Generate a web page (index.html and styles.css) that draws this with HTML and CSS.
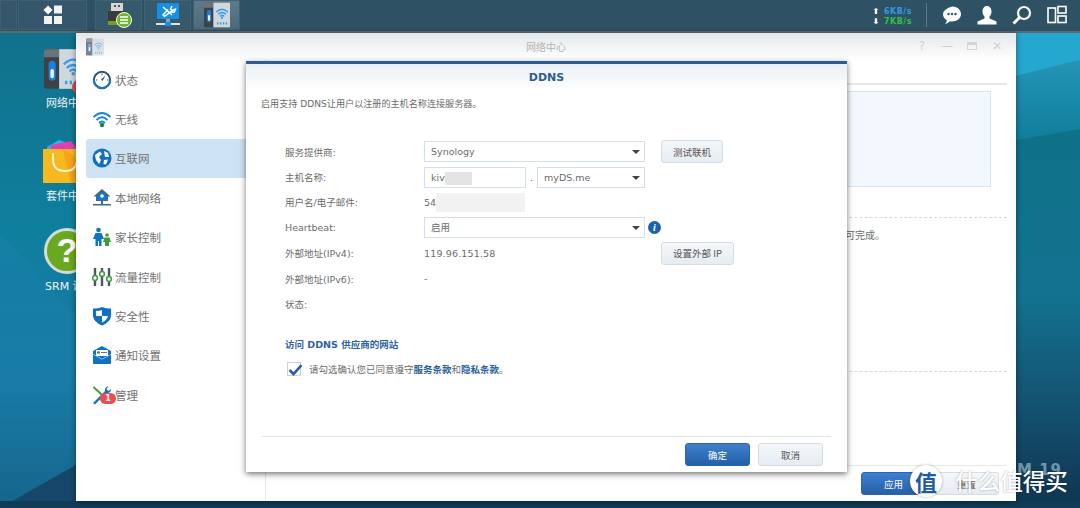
FILE: index.html
```html
<!DOCTYPE html>
<html lang="zh-CN">
<head>
  <meta charset="UTF-8">
  <link rel="stylesheet" href="styles.css">
  <title>DDNS</title>
</head>
<body>
  <svg class="defs" width="0" height="0">
    <symbol id="netIcon" viewBox="0 0 36 36">
      <path d="M0 3Q0 1 2 1H13V35H2Q0 35 0 33Z" fill="#3c4248"/>
      <path d="M0 3Q0 1 2 1H13V8H0Z" fill="#6d7378"/>
      <rect x="4" y="11" width="6" height="17" rx="3" fill="#1b7fe0"/>
      <rect x="5.5" y="18" width="3" height="8" rx="1.5" fill="#e8f3fb"/>
      <rect x="13" y="1" width="23" height="34" fill="#cfd8dc"/>
      <path d="M17 14Q25 6 33 14M19.500 17Q25 12 30.500 17M22 20Q25 17 28 20" fill="none" stroke="#3b9be8" stroke-width="2"/>
      <circle cx="25" cy="22" r="1.500" fill="#3b9be8"/>
      <path d="M19 28v3M23 28v3M27 28v3M31 28v3" stroke="#3b9be8" stroke-width="2"/>
    </symbol>
  </svg>

  <div class="desktop">
    <!-- Wallpaper -->
    <svg class="wallpaper" width="1080" height="508" viewBox="0 0 1080 508">
      <defs>
        <linearGradient id="wallBase" x1="0" y1="0" x2="0" y2="1">
          <stop offset="0" stop-color="#116f89"/>
          <stop offset="0.45" stop-color="#0f7f9e"/>
          <stop offset="0.75" stop-color="#1878a4"/>
          <stop offset="1" stop-color="#124a6b"/>
        </linearGradient>
        <linearGradient id="wallRight" x1="0" y1="0" x2="0" y2="1">
          <stop offset="0" stop-color="#0f7188"/>
          <stop offset="0.45" stop-color="#137290"/>
          <stop offset="0.75" stop-color="#14506f"/>
          <stop offset="1" stop-color="#0e3550"/>
        </linearGradient>
        <linearGradient id="wallBand" x1="0" y1="0" x2="0" y2="1">
          <stop offset="0" stop-color="#2594b6"/>
          <stop offset="1" stop-color="#0f7f9c"/>
        </linearGradient>
      </defs>
      <rect width="1080" height="508" fill="url(#wallBase)"/>
      <path d="M0 233L76 317V508H0Z" fill="#1a80ab" opacity="0.5"/>
      <path d="M0 508L120 440V508Z" fill="#14476a"/>
      <rect x="1016" y="120" width="64" height="388" fill="url(#wallRight)"/>
      <path d="M1016 76L1080 60V129L1016 140Z" fill="url(#wallBand)"/>
      <path d="M1016 33H1080V60L1016 76Z" fill="#25a8d0"/>
      <rect y="501" width="1080" height="7" fill="#103c58"/>
    </svg>
    <span class="wall-mark">M 19</span>

    <!-- Taskbar -->
    <div class="taskbar">
      <div class="task-stub"></div>
      <div class="task-main">
        <svg width="20" height="20" viewBox="0 0 20 20">
          <path d="M5 0.500L9.500 5 5 9.500 0.500 5Z" fill="#fff"/>
          <rect x="11" y="0.500" width="8" height="8" fill="#f2f2f2"/>
          <rect x="1" y="11" width="8" height="8" fill="#f2f2f2"/>
          <rect x="11" y="11" width="8" height="8" fill="#f2f2f2"/>
        </svg>
      </div>
      <div class="task-btn">
        <svg width="26" height="26" viewBox="0 0 26 26">
          <rect x="5" y="1" width="12" height="9" fill="#d7d7d7"/>
          <rect x="8" y="3" width="2" height="2" fill="#555"/>
          <rect x="12" y="3" width="2" height="2" fill="#555"/>
          <rect x="2" y="9" width="18" height="14" rx="1" fill="#3a3d35"/>
          <rect x="2" y="19" width="12" height="4" fill="#7c9a2c"/>
          <circle cx="18" cy="18" r="7.500" fill="#6eb52c" stroke="#fff"/>
          <path d="M14 15h8M14 18h8M14 21h8" stroke="#fff" stroke-width="1.500"/>
        </svg>
      </div>
      <div class="task-btn">
        <svg width="24" height="26" viewBox="0 0 24 26">
          <rect x="1" y="1" width="22" height="16" rx="1" fill="#1690e4"/>
          <path d="M7 5l9 8M16 4l-1.500 3 2 1.500 3-1.500Q19 12 15 9.500L8.500 14.500 7 13 12 7.500" fill="none" stroke="#fff" stroke-width="1.500"/>
          <rect x="10" y="17" width="4" height="3" fill="#8fa4b0"/>
          <rect x="0" y="21" width="24" height="2" fill="#dfe6ea"/>
          <rect x="9" y="20" width="6" height="4" fill="#1690e4"/>
        </svg>
      </div>
      <div class="task-btn task-active">
        <svg width="26" height="26"><use href="#netIcon"/></svg>
      </div>
      <div class="tray">
        <div class="speed">
          <div class="speed-row speed-up"><span class="arrow">⬆</span>6KB/s</div>
          <div class="speed-row speed-down"><span class="arrow">⬇</span>7KB/s</div>
        </div>
        <div class="tray-line"></div>
        <svg class="tray-icon" width="20" height="20" viewBox="0 0 20 20">
          <path d="M10 1.500C15 1.500 19 4.500 19 9S15 16.500 10 16.500Q8.500 16.500 8 16.300 6 18.500 3 19 5 17 4.800 15 1 13 1 9 1 4.500 10 1.500Z" fill="#fff"/>
          <circle cx="6.500" cy="9" r="1.300" fill="#3d6175"/>
          <circle cx="10" cy="9" r="1.300" fill="#3d6175"/>
          <circle cx="13.500" cy="9" r="1.300" fill="#3d6175"/>
        </svg>
        <svg class="tray-icon" width="20" height="20" viewBox="0 0 20 20">
          <path d="M10 1C13 1 14.500 3.500 14.500 6.500 14.500 9 13.500 10.500 12.500 11.500V13.500L19.500 16.500V19.500H.5V16.500L7.500 13.500V11.500C6.500 10.500 5.500 9 5.500 6.500 5.500 3.500 7 1 10 1Z" fill="#fff"/>
        </svg>
        <svg class="tray-icon" width="20" height="20" viewBox="0 0 20 20">
          <circle cx="12" cy="8" r="6" fill="none" stroke="#fff" stroke-width="2.200"/>
          <path d="M7.500 12.500L1.500 18.500" stroke="#fff" stroke-width="3"/>
        </svg>
        <svg class="tray-icon" width="20" height="20" viewBox="0 0 20 20">
          <rect x="1" y="3" width="7.500" height="14.500" fill="none" stroke="#fff" stroke-width="1.600"/>
          <rect x="11" y="1.500" width="8" height="6.500" fill="none" stroke="#fff" stroke-width="1.600"/>
          <rect x="11" y="11" width="8" height="6.500" fill="none" stroke="#fff" stroke-width="1.600"/>
        </svg>
      </div>
    </div>

    <!-- Desktop icons, mostly hidden by the window -->
    <div class="desk-icon desk-net">
      <svg width="48" height="42"><use href="#netIcon"/></svg>
      <span class="desk-badge"></span>
      <div class="desk-label">网络中心</div>
    </div>
    <div class="desk-icon desk-pkg">
      <svg width="48" height="48" viewBox="0 0 48 48">
        <path d="M4 10L16 3 30 8 30 20 4 20Z" fill="#27b5e8"/>
        <path d="M8 8L28 4 36 14 8 20Z" fill="#e040b0"/>
        <path d="M0 12H44L48 46H0Z" fill="#f6b91f"/>
        <path d="M20 12L48 30V46H28Z" fill="#f9a11a"/>
        <path d="M10 16V22Q10 34 22 34T34 22V16" fill="none" stroke="#fff3c9" stroke-width="2"/>
      </svg>
      <div class="desk-label">套件中心</div>
    </div>
    <div class="desk-icon desk-help">
      <div class="help-ball">?</div>
      <div class="desk-label">SRM 说明</div>
    </div>

    <!-- Network center window -->
    <div class="window">
      <div class="win-title">
        <svg class="win-logo" width="20" height="18"><use href="#netIcon"/></svg>
        <span class="win-name">网络中心</span>
        <div class="win-ctrls">
          <span class="win-ctrl">?</span>
          <span class="win-ctrl">—</span>
          <span class="win-ctrl"><span class="win-max"></span></span>
          <span class="win-ctrl">✕</span>
        </div>
      </div>
      <div class="win-body">
        <div class="sidebar">
          <div class="side-item">
            <svg width="20" height="20" viewBox="0 0 20 20">
              <circle cx="10" cy="10" r="8.200" fill="#fff" stroke="#33516b" stroke-width="2"/>
              <path d="M2 10A8 8 0 0 0 18 10" fill="none" stroke="#1b78c8" stroke-width="2"/>
              <path d="M13.500 5.500L9 9.500 10.500 11Z" fill="#33516b"/>
              <path d="M10 3.500v1.500M4 10h1.500M15 10h1.500" stroke="#33516b"/>
            </svg>
            <span>状态</span>
          </div>
          <div class="side-item">
            <svg width="20" height="20" viewBox="0 0 20 20">
              <path d="M1.500 8Q10 0 18.500 8M4.500 11Q10 5.500 15.500 11M7 14Q10 11 13 14" fill="none" stroke="#1b85d8" stroke-width="1.900"/>
              <circle cx="10" cy="16" r="2.200" fill="#16883a"/>
            </svg>
            <span>无线</span>
          </div>
          <div class="side-item side-active">
            <svg width="20" height="20" viewBox="0 0 20 20">
              <circle cx="10" cy="10" r="9.500" fill="#1470bd"/>
              <path d="M3 7L8 3.500 10 6 7 9 9 12 7 16 4 12ZM12 3L16 5 17 9 13 9ZM12 12L16 11.500 14 16.500 11.500 16Z" fill="#fff"/>
            </svg>
            <span>互联网</span>
          </div>
          <div class="side-item">
            <svg width="20" height="20" viewBox="0 0 20 20">
              <path d="M10 1L18.500 8.500H16V13H4V8.500H1.500Z" fill="#4c6478"/>
              <path d="M10 3.500L15 8V12.500H5V8Z" fill="#0f7ad0"/>
              <circle cx="10" cy="8" r="1.800" fill="#fff"/>
              <rect x="9" y="13" width="2" height="3" fill="#4c6478"/>
              <rect x="1" y="16" width="18" height="1.500" fill="#4c6478"/>
            </svg>
            <span>本地网络</span>
          </div>
          <div class="side-item">
            <svg width="20" height="20" viewBox="0 0 20 20">
              <circle cx="6.500" cy="3" r="2.300" fill="#0f74c8"/>
              <path d="M3.500 6H9.500L12 12H9.500V19H7V14H6V19H3.500V12H1Z" fill="#0f74c8"/>
              <circle cx="15" cy="8" r="1.800" fill="#3f9c3a"/>
              <path d="M12.500 10.500H17.500L19 15H17V19H13V15H11Z" fill="#3f9c3a"/>
            </svg>
            <span>家长控制</span>
          </div>
          <div class="side-item">
            <svg width="20" height="20" viewBox="0 0 20 20">
              <path d="M3 1V19M10 1V19M17 1V19" stroke="#46586a" stroke-width="2.400"/>
              <circle cx="3" cy="11" r="2.400" fill="#fff" stroke="#3f9c3a" stroke-width="1.500"/>
              <circle cx="10" cy="7" r="2.400" fill="#fff" stroke="#3f9c3a" stroke-width="1.500"/>
              <circle cx="17" cy="12" r="2.400" fill="#fff" stroke="#3f9c3a" stroke-width="1.500"/>
            </svg>
            <span>流量控制</span>
          </div>
          <div class="side-item">
            <svg width="20" height="20" viewBox="0 0 20 20">
              <path d="M10 1Q15 3 19 2.500V10Q18.500 16 10 19.500 1.500 16 1 10V2.500Q5 3 10 1Z" fill="#0f70c4"/>
              <path d="M10 4V10H4V5Q8 5 10 4ZM10 10H16Q15 14 10 16.500Z" fill="#fff"/>
            </svg>
            <span>安全性</span>
          </div>
          <div class="side-item">
            <svg width="20" height="20" viewBox="0 0 20 20">
              <path d="M1 6L10 1 19 6V9L10 14 1 9Z" fill="#0f70c4"/>
              <rect x="4" y="5" width="12" height="6" fill="#fff"/>
              <rect x="5" y="6.500" width="3" height="2" fill="#1c9a3a"/>
              <path d="M9 7.500h6" stroke="#5d7489"/>
              <path d="M1 9.500L10 14.500 19 9.500V18Q19 19 18 19H2Q1 19 1 18Z" fill="#0f70c4"/>
            </svg>
            <span>通知设置</span>
          </div>
          <div class="side-item side-admin">
            <svg width="20" height="20" viewBox="0 0 20 20">
              <path d="M1 18L13 6Q12.500 2 16.500 1L14.500 4 16.500 6 19 4Q19 8.500 14.500 8L3 19.500Z" fill="#1278cc"/>
              <path d="M1.500 2L10 10" stroke="#3f9c3a" stroke-width="1.800"/>
            </svg>
            <span class="admin-badge">1</span>
            <span>管理</span>
          </div>
        </div>

        <div class="content">
          <div class="tab-line"></div>
          <div class="info-box"></div>
          <div class="dash dash-one"></div>
          <div class="back-note">您可以在一段时间可完成。</div>
          <div class="dash dash-two"></div>
          <div class="content-foot">
            <button class="btn btn-primary">应用</button>
            <button class="btn">重置</button>
          </div>
        </div>
      </div>
    </div>

    <!-- DDNS dialog -->
    <div class="modal">
      <div class="modal-head">DDNS</div>
      <p class="modal-desc">启用支持 DDNS让用户以注册的主机名称连接服务器。</p>
      <div class="form">
        <div class="form-row">
          <label>服务提供商:</label>
          <div class="select select-wide">Synology</div>
          <button class="btn btn-side">测试联机</button>
        </div>
        <div class="form-row">
          <label>主机名称:</label>
          <div class="host-field">kiv<span class="blur blur-host"></span></div>
          <span class="dot">.</span>
          <div class="select select-domain">myDS.me</div>
        </div>
        <div class="form-row">
          <label>用户名/电子邮件:</label>
          <div class="value">54<span class="blur blur-mail"></span></div>
        </div>
        <div class="form-row">
          <label>Heartbeat:</label>
          <div class="select select-wide">启用</div>
          <span class="info-dot">i</span>
        </div>
        <div class="form-row">
          <label>外部地址(IPv4):</label>
          <div class="value value-ip">119.96.151.58</div>
          <button class="btn btn-side">设置外部 IP</button>
        </div>
        <div class="form-row">
          <label>外部地址(IPv6):</label>
          <div class="value">-</div>
        </div>
        <div class="form-row">
          <label>状态:</label>
        </div>
      </div>
      <div class="visit-link">访问 DDNS 供应商的网站</div>
      <div class="agree">
        <span class="checkbox">
          <svg width="14" height="14" viewBox="0 0 14 14"><path d="M1.500 7L5.500 11 13.500 2" fill="none" stroke="#2a5f9e" stroke-width="2.600"/></svg>
        </span>
        <span>请勾选确认您已同意遵守<b class="term">服务条款</b>和<b class="term">隐私条款</b>。</span>
      </div>
      <div class="modal-foot">
        <button class="btn btn-primary">确定</button>
        <button class="btn">取消</button>
      </div>
    </div>

    <!-- Watermark -->
    <div class="watermark">
      <span class="wm-logo">值</span>
      <span class="wm-text">什么值得买</span>
    </div>
  </div>
</body>
</html>
```

FILE: styles.css
```css
* {
  box-sizing: border-box;
}
html, body {
  margin: 0;
  padding: 0;
  overflow: hidden;
}
body {
  font-family: "DejaVu Sans", "Noto Sans CJK SC", sans-serif;
  font-size: 9.5px;
  color: #6c6c6c;
}
.defs {
  position: absolute;
}
.desktop {
  position: relative;
  width: 1080px;
  height: 508px;
  overflow: hidden;
}
.wallpaper {
  position: absolute;
  left: 0;
  top: 0;
}
.wall-mark {
  position: absolute;
  left: 1017px;
  top: 461px;
  color: rgba(200,225,240,0.55);
  font: bold 15px/18px "DejaVu Sans", sans-serif;
  letter-spacing: 1px;
}

/* taskbar */
.taskbar {
  position: relative;
  height: 33px;
  display: flex;
  padding-bottom: 1px;
  background: #2f5164;
  border-bottom: 2px solid #5b6b74;
}
.task-stub {
  width: 17px;
  background: #35566a;
  border: 1px solid #3f6073;
  margin-right: 1px;
}
.task-main {
  width: 69px;
  margin-right: 8px;
  background: #35566a;
  border: 1px solid #3f6073;
  display: flex;
  align-items: center;
  justify-content: center;
}
.task-btn {
  width: 47px;
  margin-right: 2px;
  background: #37596c;
  border: 1px solid #40616f;
  display: flex;
  align-items: center;
  justify-content: center;
}
.task-active {
  background: linear-gradient(#5d7b8b, #4a6a7b);
}
.tray {
  margin-left: auto;
  display: flex;
  align-items: center;
}
.speed {
  font-size: 8px;
  font-weight: bold;
  letter-spacing: 0.5px;
  line-height: 10px;
  margin-right: 14px;
  margin-top: 3px;
}
.speed-row {
  display: flex;
  align-items: center;
  gap: 4px;
}
.arrow {
  color: #fff;
  font-size: 8px;
}
.speed-up {
  color: #2f9be0;
}
.speed-down {
  color: #2fc04a;
}
.tray-line {
  width: 1px;
  height: 24px;
  background: #5d7a8a;
  margin-right: 15px;
}
.tray-icon {
  margin-right: 15px;
}
.tray-icon:last-child {
  margin-right: 13px;
}

/* desktop icons */
.desk-icon {
  position: absolute;
  width: 70px;
}
.desk-net {
  left: 41px;
  top: 48px;
}
.desk-pkg {
  left: 43px;
  top: 137px;
}
.desk-help {
  left: 44px;
  top: 228px;
}
.desk-badge {
  position: absolute;
  left: 31px;
  top: 32px;
  width: 14px;
  height: 14px;
  border-radius: 50%;
  background: #e2474c;
}
.desk-label {
  color: #e9f4f8;
  font-size: 11px;
  margin-top: 2px;
  margin-left: 5px;
  white-space: nowrap;
}
.desk-pkg .desk-label {
  margin-left: 3px;
  margin-top: 0;
}
.desk-help .desk-label {
  margin-left: 1px;
  margin-top: 3px;
}
.help-ball {
  width: 46px;
  height: 46px;
  border-radius: 50%;
  background: #6aa81f;
  border: 3px solid #d3dcd8;
  color: #fff;
  font: bold 34px/38px "Liberation Sans", sans-serif;
  text-align: center;
}

/* window */
.window {
  position: absolute;
  left: 76px;
  top: 33px;
  width: 940px;
  height: 468px;
  background: #fff;
  box-shadow: 0 1px 6px rgba(0,0,0,0.45);
  display: flex;
  flex-direction: column;
}
.win-title {
  height: 27px;
  display: flex;
  align-items: center;
  justify-content: center;
  position: relative;
  background: linear-gradient(#e4e7e9, #fff);
  color: #b5b5b5;
  font-size: 10px;
}
.win-logo {
  position: absolute;
  left: 9px;
  top: 5px;
  opacity: 0.65;
}
.win-name {
  position: relative;
  top: 0;
}
.win-ctrls {
  position: absolute;
  right: 12px;
  top: 6px;
  display: flex;
  gap: 11px;
  font-size: 12px;
  color: #d0d0d0;
}
.win-ctrl {
  width: 14px;
  height: 14px;
  display: flex;
  align-items: center;
  justify-content: center;
  line-height: 14px;
}
.win-max {
  display: block;
  width: 10px;
  height: 8px;
  border: 1px solid #d4d4d4;
  border-top-width: 3px;
}
.win-body {
  flex: 1;
  display: flex;
}
.sidebar {
  width: 190px;
  padding-left: 10px;
  border-right: 1px solid #e8e8e8;
  font-family: "Noto Sans CJK SC", sans-serif;
  font-size: 11.5px;
  color: #727272;
}
.side-item {
  position: relative;
  height: 39.4px;
  display: flex;
  align-items: center;
  gap: 3px;
  padding-left: 6px;
}
.side-active {
  background: #cde2f3;
  border-radius: 3px 0 0 3px;
}
.admin-badge {
  position: absolute;
  left: 14px;
  top: 18px;
  width: 16px;
  height: 11px;
  border-radius: 6px;
  background: #ef4a4f;
  color: #fff;
  font: bold 8px/11px "DejaVu Sans", sans-serif;
  text-align: center;
}
.content {
  flex: 1;
  display: flex;
  flex-direction: column;
  padding-top: 23px;
  padding-right: 9px;
  font-family: "Noto Sans CJK SC", sans-serif;
}
.tab-line {
  height: 2px;
  background: #e8e8e8;
}
.info-box {
  height: 96px;
  margin-top: 6px;
  margin-right: 16px;
  background: #f2f8fd;
  border: 1px solid #d5e7f7;
}
.dash {
  border-top: 1px dashed #d8d8d8;
}
.dash-one {
  margin-top: 30px;
}
.back-note {
  margin-top: 9px;
  text-align: right;
  padding-right: 122px;
  font-size: 10px;
  line-height: 16px;
}
.dash-two {
  margin-top: 128px;
}
.content-foot {
  margin-top: auto;
  height: 36px;
  border-top: 1px solid #e8e8e8;
  display: flex;
  justify-content: flex-end;
  gap: 8px;
  padding: 6px 8px 0 0;
}

/* buttons */
.btn {
  height: 23px;
  padding: 0;
  width: 65px;
  border: 1px solid #d3dde6;
  border-radius: 3px;
  background: linear-gradient(#f5f7f9, #e6ecf1);
  color: #555;
  font-family: "Noto Sans CJK SC", sans-serif;
  font-size: 9.5px;
}
.btn-primary {
  background: linear-gradient(#3f7fcd, #2460a8);
  border-color: #2a66ad;
  color: #fff;
}
.btn-side {
  padding: 0 11px;
  width: auto;
  margin-left: 16px;
}

/* dialog */
.modal {
  position: absolute;
  left: 246px;
  top: 61px;
  width: 601px;
  height: 411px;
  background: #fff;
  border-top: 3px solid #2c5c96;
  box-shadow: 0 2px 6px rgba(0,0,0,0.55);
  display: flex;
  flex-direction: column;
}
.modal-head {
  height: 26px;
  padding-top: 7px;
  text-align: center;
  font-weight: bold;
  font-size: 11px;
  color: #2f5d8a;
  background: linear-gradient(#e9eff4, #fff);
}
.modal-desc {
  margin: 6px 0 0 15px;
  line-height: 16px;
  font-size: 9.1px;
}
.form {
  margin: 27px 0 0 39px;
}
.form-row {
  display: flex;
  align-items: center;
  height: 25.4px;
}
.form-row label {
  width: 139px;
}
.select {
  position: relative;
  height: 21px;
  line-height: 19px;
  padding-left: 6px;
  border: 1px solid #d3dfea;
  background: #fff;
}
.select::after {
  content: "";
  position: absolute;
  right: 4px;
  top: 8px;
  border: 4px solid transparent;
  border-top: 4px solid #444;
}
.select-wide {
  width: 221px;
}
.select-domain {
  width: 108px;
}
.host-field {
  width: 102px;
  height: 21px;
  line-height: 19px;
  padding-left: 6px;
  border: 1px solid #d3dfea;
  display: flex;
}
.dot {
  width: 11px;
  text-align: center;
}
.blur {
  display: block;
}
.blur-host {
  width: 27px;
  height: 13px;
  margin-top: 4px;
  background: #e4e4e4;
}
.value {
  display: flex;
  align-items: center;
}
.blur-mail {
  width: 89px;
  height: 19px;
  background: #f2f2f2;
}
.value-ip {
  width: 221px;
  letter-spacing: 0.15px;
}
.info-dot {
  width: 13px;
  height: 13px;
  margin-left: 3px;
  border-radius: 50%;
  background: #1b62ac;
  color: #fff;
  font: italic bold 10px/13px "Liberation Serif", serif;
  text-align: center;
}
.visit-link {
  margin: 20px 0 0 39px;
  font-weight: bold;
  color: #30639c;
  line-height: 16px;
}
.agree {
  margin: 9px 0 0 41px;
  display: flex;
  align-items: center;
  gap: 8px;
}
.checkbox {
  width: 14px;
  height: 14px;
  border: 1px solid #c6d2dd;
  display: block;
}
.checkbox svg {
  display: block;
}
.term {
  color: #2a5f9e;
  font-weight: bold;
}
.modal-foot {
  margin: auto 16px 0;
  height: 36px;
  border-top: 1px solid #e6e6e6;
  display: flex;
  justify-content: flex-end;
  gap: 8px;
  padding: 6px 8px 0 0;
}

/* watermark */
.watermark {
  position: absolute;
  left: 910px;
  top: 465px;
  display: flex;
  align-items: center;
  gap: 13px;
}
.wm-logo {
  width: 32px;
  height: 32px;
  border-radius: 50%;
  background: #fff;
  box-shadow: 0 0 3px rgba(0,0,0,0.3);
  color: #1c5ba6;
  font: bold 22px/32px "Noto Sans CJK SC", sans-serif;
  text-align: center;
}
.wm-text {
  color: #fff;
  font: 500 22.6px/32px "Noto Sans CJK SC", sans-serif;
  text-shadow: 0 0 2px rgba(0,0,0,0.35);
}
```
